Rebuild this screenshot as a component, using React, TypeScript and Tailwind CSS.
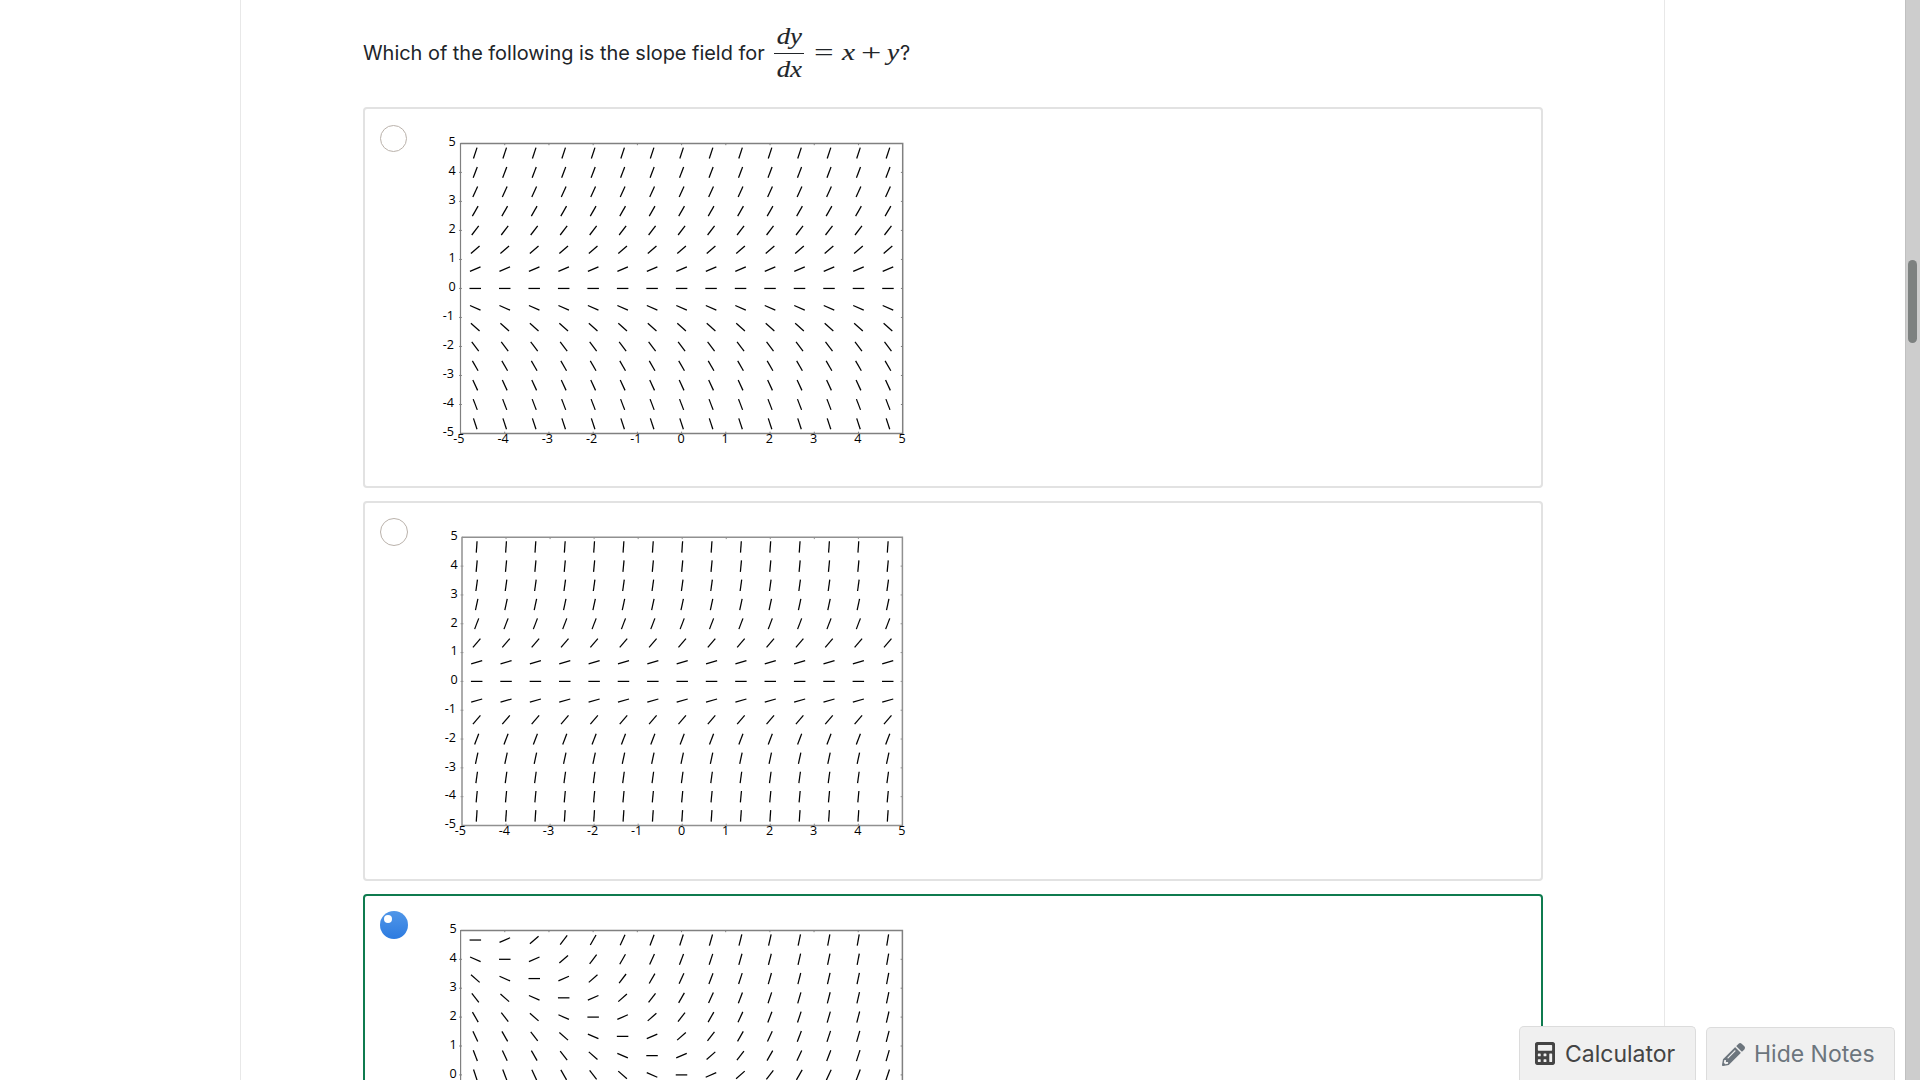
import React from "react";
import { FaCalculator, FaPencilAlt } from "react-icons/fa";

type PlotProps = {
  slope: (x: number, y: number) => number;
  left: number;
  top: number;
  right: number;
  bottom: number;
  labelX: number;
  frame: string;
  leftWidth: number;
};

const TICKS = [-5, -4, -3, -2, -1, 0, 1, 2, 3, 4, 5];
const GRID = Array.from({ length: 15 }, (_, i) => ((i - 7) * 2) / 3);
const HALF = 5.75;

/* Slope field over [-5, 5] x [-5, 5]; coordinates are relative to the svg's corner. */
function SlopeField({ slope, left, top, right, bottom, labelX, frame, leftWidth }: PlotProps) {
  const ux = (right - left) / 10;
  const uy = (bottom - top) / 10;
  const px = (x: number) => left + (x + 5) * ux;
  const py = (y: number) => bottom - (y + 5) * uy;
  return (
    <svg width="500" height="330" className="block shrink-0" fontFamily="'Open Sans', 'Noto Sans', sans-serif" fontSize="12.6">
      <g stroke={frame} fill="none">
        <path d={`M${left} ${top}H${right}V${bottom}H${left}`} strokeWidth="1.5" />
        <path d={`M${left} ${top - 0.5}V${bottom + 0.5}`} strokeWidth={leftWidth} />
        {TICKS.slice(1, -1).map((t) => (
          <path
            key={t}
            strokeWidth="1"
            d={`M${px(t)} ${top}v1.8M${px(t)} ${bottom}v-1.8M${left - 1.4} ${py(t)}h2.8M${right} ${py(t)}h-1.8`}
          />
        ))}
      </g>
      <g stroke="#000" strokeWidth="1.25">
        {GRID.flatMap((x) =>
          GRID.map((y) => {
            const a = Math.atan((slope(x, y) * uy) / ux);
            const dx = HALF * Math.cos(a);
            const dy = HALF * Math.sin(a);
            return <line key={`${x},${y}`} x1={px(x) - dx} y1={py(y) + dy} x2={px(x) + dx} y2={py(y) - dy} />;
          })
        )}
      </g>
      <g fill="#000">
        {TICKS.map((t) => (
          <text key={t} x={t < 0 ? labelX - 5.8 : labelX} y={py(t) + 2.8}>
            {t}
          </text>
        ))}
      </g>
      <g fill="#000" textAnchor="middle">
        {TICKS.map((t) => (
          <text key={t} x={px(t) - (t < 0 ? 1.6 : 0.6)} y={bottom + 9.5}>
            {t}
          </text>
        ))}
      </g>
    </svg>
  );
}

function Radio({ checked, size }: { checked?: boolean; size: string }) {
  if (checked) {
    return (
      <span className="flex h-7 w-7 shrink-0 rounded-full bg-linear-to-b from-[#5096e8] to-[#2c7be0] pt-1 pl-1">
        <span className="h-2 w-2 rounded-full bg-white" />
      </span>
    );
  }
  return <span className={`${size} shrink-0 rounded-full border border-[#bab2ab] bg-white`} />;
}

function Question() {
  return (
    <div className="flex h-[107px] items-start text-[#212529]">
      <span className="mt-[38px] h-[30px] w-[411px] text-[19.92px] leading-[30px] whitespace-nowrap">
        Which of the following is the slope field for
      </span>
      <span className="mt-[22px] flex w-[30px] flex-col items-center font-['Liberation_Serif'] text-[24px] italic [-webkit-text-stroke:0.15px_#212529]">
        <span className="h-[31px] scale-x-[1.12] leading-[28px]">dy</span>
        <span className="h-px w-[30px] bg-[#212529]" />
        <span className="h-[31px] scale-x-[1.12] leading-[31px]">dx</span>
      </span>
      <span className="mt-[38px] flex h-[30px] font-['Liberation_Serif'] text-[24px] leading-[29px]">
        <span className="ml-[10px] w-[28px] origin-left scale-x-[1.45]">=</span>
        <span className="w-[19px] origin-left scale-x-[1.22] italic [-webkit-text-stroke:0.15px_#212529]">x</span>
        <span className="w-[26px] origin-left scale-x-[1.5]">+</span>
        <span className="w-[13px] origin-left scale-x-[1.14] italic [-webkit-text-stroke:0.15px_#212529]">y</span>
      </span>
      <span className="mt-[38px] text-[19.92px] leading-[30px]">?</span>
    </div>
  );
}

export default function App() {
  return (
    <div className="relative flex h-[1080px] w-[1920px] overflow-hidden bg-white font-['Inter',sans-serif]">
      <main className="ml-[240px] h-full w-[1425px] overflow-hidden border-x border-[#e8e8e8] pl-[122px]">
        <Question />
        <div className="flex w-[1180px] flex-col gap-[13px]">
          <div className="flex h-[381px] rounded-[4px] border-2 border-[#e2e2e2] pt-4 pl-[15px]">
            <Radio size="h-[27px] w-[27px]" />
            <SlopeField slope={(_, y) => y} left={53.5} top={18.4} right={495.7} bottom={308.5} labelX={41.6} frame="#808080" leftWidth={1.2} />
          </div>
          <div className="flex h-[380px] rounded-[4px] border-2 border-[#e2e2e2] pt-[15px] pl-[15px]">
            <Radio size="h-7 w-7" />
            <SlopeField slope={(_, y) => y * y} left={54} top={19.3} right={494.4} bottom={307.5} labelX={42.6} frame="#909090" leftWidth={1.5} />
          </div>
          <div className="flex h-[380px] shrink-0 rounded-[4px] border-2 border-[#0f7b4f] pt-[15px] pl-[15px]">
            <Radio checked size="h-7 w-7" />
            <SlopeField slope={(x, y) => x + y} left={52.6} top={19.4} right={494.4} bottom={308.4} labelX={41.4} frame="#808080" leftWidth={1.2} />
          </div>
        </div>
      </main>
      <aside className="ml-auto h-full w-[15px] border-l border-[#c0c0c0] bg-[#cdcdcd] pt-[260px] pl-[2px]">
        <div className="h-[83px] w-[9px] rounded-full bg-[#7d8180]" />
      </aside>
      <div className="absolute right-[25px] bottom-0 flex items-end gap-[10px] text-[23px] whitespace-nowrap">
        <button className="flex h-[54px] w-[177px] rounded-t-[5px] border border-b-0 border-[#dcdcdc] bg-[#f0f0f0] pl-[15px] text-[#444]">
          <FaCalculator className="mt-[15px] h-[23px] w-5" />
          <span className="mt-[12px] ml-[10px] leading-[30px]">Calculator</span>
        </button>
        <button className="flex h-[53px] w-[189px] rounded-t-[5px] border border-b-0 border-[#dcdcdc] bg-[#f0f0f0] pl-[15px] text-[#6c757d]">
          <FaPencilAlt className="mt-[15px] h-[23px] w-[23px]" />
          <span className="mt-[11px] ml-[9px] leading-[30px]">Hide Notes</span>
        </button>
      </div>
    </div>
  );
}
